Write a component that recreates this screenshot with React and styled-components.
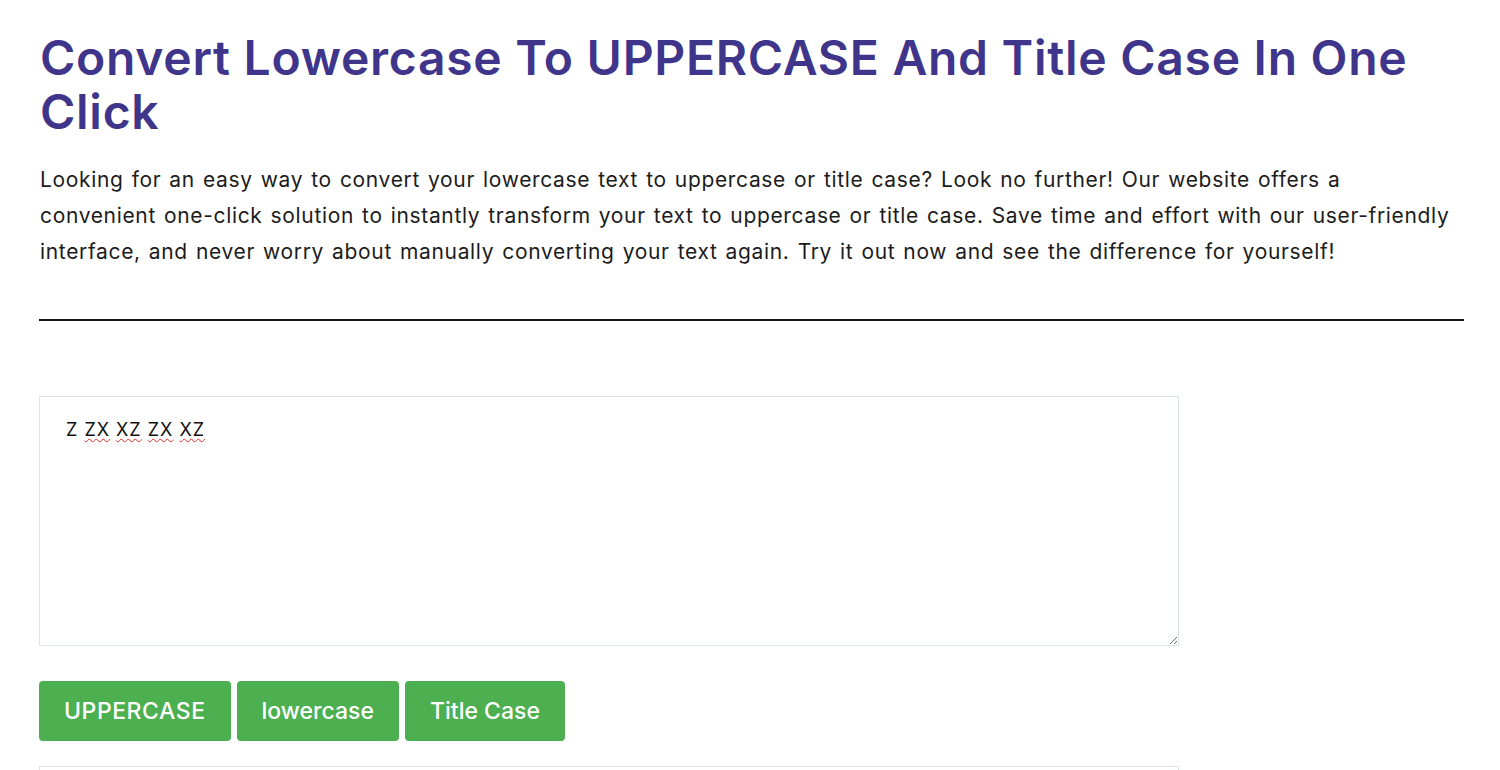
import React from "react";
import styled, { createGlobalStyle } from "styled-components";

const Global = createGlobalStyle`
  html, body { margin: 0; padding: 0; background: #fff; }
  body { font-family: Inter, "Noto Sans", sans-serif; color: #1c1c1c; }
  * { box-sizing: border-box; }
`;

const Page = styled.main`
  padding: 31px 36px 0 39px;
  overflow: hidden;
  height: 770px;
`;

const Title = styled.h1`
  margin: 0;
  font-family: Inter, sans-serif;
  font-weight: 600;
  font-size: 48px;
  line-height: 54px;
  letter-spacing: 0.72px;
  color: #3f358a;
  padding-left: 1px;
`;

const Intro = styled.p`
  margin: 23px 0 0;
  font-family: Inter, sans-serif;
  font-size: 21px;
  line-height: 36px;
  letter-spacing: 0.66px;
  word-spacing: 1.5px;
  color: #1c1c1c;
  padding-left: 1px;
`;

const Rule = styled.hr`
  margin: 49px 0 0;
  border: 0;
  height: 2px;
  background: #161616;
`;

const Editor = styled.div`
  margin-top: 75px;
  width: 1140px;
  height: 250px;
  border: 1px solid #dfe3ea;
  padding: 21px 26px;
  font-family: Inter, sans-serif;
  font-size: 18px;
  line-height: 24px;
  letter-spacing: 1px;
  color: #111;
  resize: both;
  overflow: auto;
`;

const Word = styled.span`
  text-decoration: ${(p) => (p.$bad ? "underline wavy #e8272b" : "none")};
  text-decoration-thickness: 1px;
  text-underline-offset: 2px;
`;

const Buttons = styled.div`
  display: flex;
  gap: 6px;
  margin-top: 35px;
`;

const Button = styled.button`
  height: 60px;
  padding: 0 25px;
  border: 0;
  border-radius: 4px;
  background: #4caf50;
  color: #fff;
  font-family: Inter, sans-serif;
  font-weight: 500;
  font-size: 23px;
  letter-spacing: ${(p) => (p.$caps ? "0.55px" : "0px")};
  cursor: pointer;
`;

const Output = styled.div`
  margin-top: 25px;
  width: 1140px;
  height: 250px;
  border: 1px solid #dfe3ea;
`;

export default function App() {
  const words = ["Z", "ZX", "XZ", "ZX", "XZ"];
  return (
    <>
      <Global />
      <Page>
        <Title>Convert Lowercase To UPPERCASE And Title Case In One Click</Title>
        <Intro>
          Looking for an easy way to convert your lowercase text to uppercase or title case? Look no further! Our website offers a convenient one-click solution to instantly transform your text to uppercase or title case. Save time and effort with our user-friendly interface, and never worry about manually converting your text again. Try it out now and see the difference for yourself!
        </Intro>
        <Rule />
        <Editor>
          {words.map((w, i) => (
            <React.Fragment key={i}>
              <Word $bad={i > 0}>{w}</Word>
              {i < words.length - 1 ? " " : ""}
            </React.Fragment>
          ))}
        </Editor>
        <Buttons>
          <Button $caps>UPPERCASE</Button>
          <Button>lowercase</Button>
          <Button>Title Case</Button>
        </Buttons>
        <Output />
      </Page>
    </>
  );
}
